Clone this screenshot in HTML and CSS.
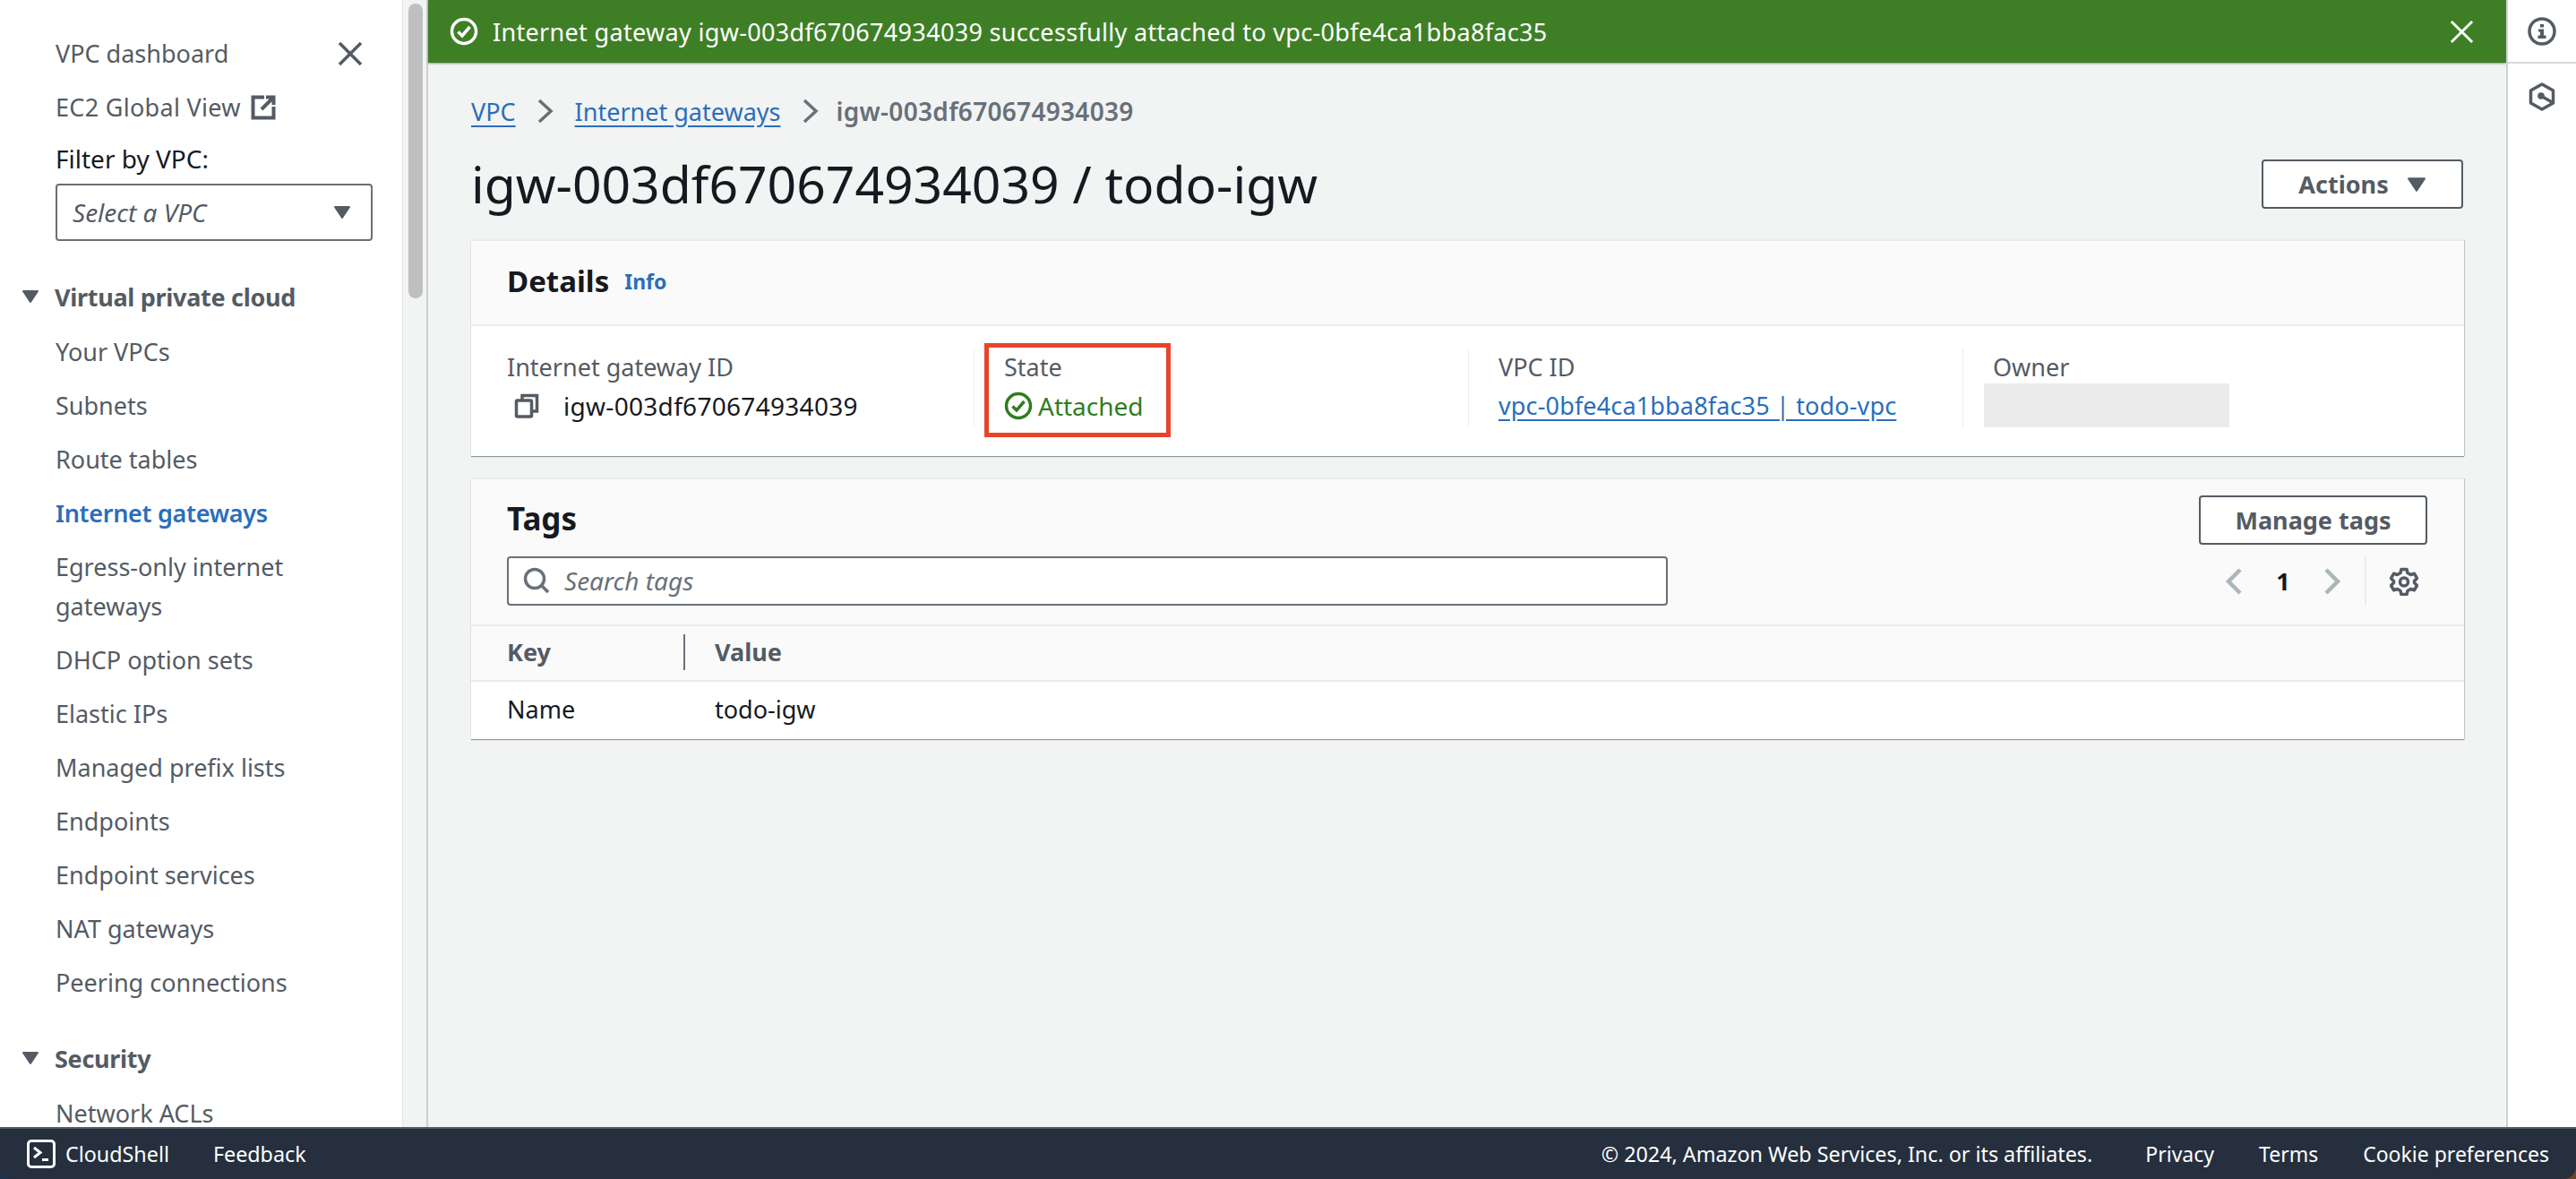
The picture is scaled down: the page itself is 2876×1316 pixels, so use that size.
FILE: index.html
```html
<!DOCTYPE html>
<html lang="en">
<head>
  <meta charset="UTF-8" />
  <title>Internet gateway details</title>
  <link rel="stylesheet" href="styles.css">
</head>
<body>
  <div class="app">
    <!-- left navigation -->
    <nav class="sidebar">
      <div class="nav-top">
        <a class="nav-link">VPC dashboard</a>
        <svg class="nav-close" viewBox="0 0 28 28"><path d="M2 2 26 26M26 2 2 26" /></svg>
      </div>
      <div class="nav-link nav-ext">EC2 Global View
        <svg class="ext-icon" viewBox="0 0 28 28"><path d="M15 2.500H2.500V25.500H25.500V13M25 3 12 16M17 2.500H25.500V11" /></svg>
      </div>
      <div class="filter-label">Filter by VPC:</div>
      <div class="select-box">
        <span>Select a VPC</span>
        <svg class="caret" viewBox="0 0 20 16"><path d="M2 2H18L10 14Z" /></svg>
      </div>
      <div class="nav-group">
        <svg class="caret" viewBox="0 0 20 16"><path d="M2 2H18L10 14Z" /></svg>
        <span>Virtual private cloud</span>
      </div>
      <a class="nav-item">Your VPCs</a>
      <a class="nav-item">Subnets</a>
      <a class="nav-item">Route tables</a>
      <a class="nav-item active">Internet gateways</a>
      <a class="nav-item wrap">Egress-only internet gateways</a>
      <a class="nav-item">DHCP option sets</a>
      <a class="nav-item">Elastic IPs</a>
      <a class="nav-item">Managed prefix lists</a>
      <a class="nav-item">Endpoints</a>
      <a class="nav-item">Endpoint services</a>
      <a class="nav-item">NAT gateways</a>
      <a class="nav-item">Peering connections</a>
      <div class="nav-group second">
        <svg class="caret" viewBox="0 0 20 16"><path d="M2 2H18L10 14Z" /></svg>
        <span>Security</span>
      </div>
      <a class="nav-item">Network ACLs</a>
    </nav>

    <div class="scroll-track"><div class="scroll-thumb"></div></div>

    <main class="main">
      <div class="banner">
        <svg class="check-icon" viewBox="0 0 32 32"><circle cx="16" cy="16" r="13.500" /><path d="M9.500 16.500 14 21 22.500 11" /></svg>
        <span class="banner-text">Internet gateway igw-003df670674934039 successfully attached to vpc-0bfe4ca1bba8fac35</span>
        <svg class="banner-close" viewBox="0 0 28 28"><path d="M2 2 26 26M26 2 2 26" /></svg>
      </div>

      <div class="content">
        <div class="breadcrumbs">
          <a class="link">VPC</a>
          <svg class="crumb-sep" viewBox="0 0 20 28"><path d="M3 2 16 14 3 26" /></svg>
          <a class="link">Internet gateways</a>
          <svg class="crumb-sep" viewBox="0 0 20 28"><path d="M3 2 16 14 3 26" /></svg>
          <span class="crumb-current">igw-003df670674934039</span>
        </div>

        <div class="page-head">
          <h1>igw-003df670674934039 / todo-igw</h1>
          <button class="btn btn-actions">Actions
            <svg class="caret" viewBox="0 0 20 16"><path d="M2 2H18L10 14Z" /></svg>
          </button>
        </div>

        <section class="card">
          <div class="card-head details-head">
            <h2>Details</h2>
            <a class="info-link">Info</a>
          </div>
          <div class="details-grid">
            <div class="col">
              <div class="col-label">Internet gateway ID</div>
              <div class="col-value igw-value">
                <svg class="copy-icon" viewBox="0 0 28 28"><path d="M9 7V2.500H25.500V20H20" /><rect x="2.500" y="8" width="17" height="18" rx="1" /></svg>
                <span>igw-003df670674934039</span>
              </div>
            </div>
            <div class="col col-state">
              <div class="col-label">State</div>
              <div class="col-value state">
                <svg class="check-icon" viewBox="0 0 32 32"><circle cx="16" cy="16" r="13.500" /><path d="M9.500 16.500 14 21 22.500 11" /></svg>
                <span>Attached</span>
              </div>
              <div class="highlight"></div>
            </div>
            <div class="col">
              <div class="col-label">VPC ID</div>
              <div class="col-value"><a class="link vpc-link">vpc-0bfe4ca1bba8fac35 | todo-vpc</a></div>
            </div>
            <div class="col">
              <div class="col-label">Owner</div>
              <div class="redacted"></div>
            </div>
          </div>
        </section>

        <section class="card tags-card">
          <div class="card-head tags-head">
            <div class="tags-title">
              <h2>Tags</h2>
              <button class="btn btn-manage">Manage tags</button>
            </div>
            <div class="tags-tools">
              <div class="search-box">
                <svg class="search-icon" viewBox="0 0 30 30"><circle cx="13" cy="13" r="10.500" /><path d="M20.500 20.500 28 28" /></svg>
                <span>Search tags</span>
              </div>
              <div class="pager">
                <svg class="pager-arrow" viewBox="0 0 20 30"><path d="M17 2 4 15 17 28" /></svg>
                <span class="page-num">1</span>
                <svg class="pager-arrow" viewBox="0 0 20 30"><path d="M3 2 16 15 3 28" /></svg>
                <div class="pager-sep"></div>
                <svg class="gear-icon" viewBox="0 0 32 32"><path d="M13 2.500H19L20 6.500 23.500 8.500 27.500 7.300 30.500 12.500 27.500 15.500V17.500L30.500 20.500 27.500 25.700 23.500 24.500 20 26.500 19 30.500H13L12 26.500 8.500 24.500 4.500 25.700 1.500 20.500 4.500 17.500V15.500L1.500 12.500 4.500 7.300 8.500 8.500 12 6.500Z" /><circle cx="16" cy="16.500" r="4.500" /></svg>
              </div>
            </div>
          </div>
          <div class="tags-row tags-columns">
            <div class="cell-key">Key</div>
            <div class="cell-value">Value</div>
          </div>
          <div class="tags-row tags-body">
            <div class="cell-key">Name</div>
            <div class="cell-value">todo-igw</div>
          </div>
        </section>
      </div>
    </main>

    <aside class="rail">
      <div class="rail-top">
        <svg class="rail-icon" viewBox="0 0 32 32"><circle cx="16" cy="16" r="14" /><path class="rail-fill" d="M14 8h4v3.500h-4zM12 13.500h6v7h2.500v3.500h-9v-3.500h2.500v-4h-2z" /></svg>
      </div>
      <div class="rail-next">
        <svg class="rail-icon" viewBox="0 0 32 32"><path d="M16 2 28.500 9V23L16 30 3.500 23V9Z" stroke-linejoin="round" /><circle class="rail-fill" cx="15" cy="15" r="3.800" /><path d="M15 15 27 22" /></svg>
      </div>
    </aside>
  </div>

  <footer class="footer">
    <svg class="shell-icon" viewBox="0 0 32 32"><rect x="1.500" y="1.500" width="29" height="29" rx="3.500" /><path d="M8 9 15 14.500 8 20" /><path d="M17 22.500H24" /></svg>
    <span class="foot-shell">CloudShell</span>
    <span class="foot-feedback">Feedback</span>
    <span class="foot-copy">© 2024, Amazon Web Services, Inc. or its affiliates.</span>
    <span class="foot-link">Privacy</span>
    <span class="foot-link">Terms</span>
    <span class="foot-link">Cookie preferences</span>
  </footer>
</body>
</html>
```

FILE: styles.css
```css
* {
  box-sizing: border-box;
}
html, body {
  height: 100%;
}
body {
  margin: 0;
  width: 2876px;
  height: 1316px;
  overflow: hidden;
  display: flex;
  flex-direction: column;
  font-family: "Noto Sans", "Open Sans", sans-serif;
  font-size: 27px;
  color: #16191f;
  /* only shows at the rounded window corners */
  background: linear-gradient(to right, #1c3350 50%, #6e4326 50%);
}
svg {
  display: block;
  flex: none;
  fill: none;
  stroke: currentColor;
}
.app {
  flex: 1;
  min-height: 0;
  display: flex;
  background: #f2f3f3;
}

/* sidebar */
.sidebar {
  width: 449px;
  flex: none;
  background: #fff;
  overflow: hidden;
  padding: 30px 0 0 62px;
  color: #545b64;
}
.nav-top {
  display: flex;
  align-items: center;
  justify-content: space-between;
  height: 60px;
  padding-right: 44px;
}
.nav-close {
  width: 28px;
  height: 28px;
  stroke-width: 3.500px;
}
.nav-link {
  line-height: 60px;
}
.nav-ext {
  display: flex;
  align-items: center;
  gap: 11px;
  height: 60px;
  letter-spacing: 0.3px;
}
.ext-icon {
  width: 28px;
  height: 28px;
  stroke-width: 4px;
}
.filter-label {
  color: #16191f;
  font-size: 28px;
  height: 36px;
  line-height: 36px;
  margin-top: 9px;
}
.select-box {
  width: 354px;
  height: 64px;
  margin-top: 10px;
  display: flex;
  align-items: center;
  justify-content: space-between;
  padding: 0 22px 0 17px;
  border: 2px solid #687078;
  border-radius: 4px;
  font-size: 28px;
  font-style: italic;
}
.caret {
  width: 20px;
  height: 16px;
  fill: currentColor;
  stroke-width: 2px;
  stroke-linejoin: round;
}
.nav-group {
  display: flex;
  align-items: center;
  gap: 17px;
  margin: 32px 0 2px -38px;
  height: 60px;
  font-weight: 700;
  letter-spacing: -0.3px;
}
.nav-group.second {
  margin-top: 24px;
  margin-bottom: 2px;
}
.nav-item {
  display: block;
  line-height: 44px;
  padding: 8px 0;
  height: 60px;
}
.nav-item.active {
  color: #2a6ebb;
  font-weight: 600;
  letter-spacing: -0.3px;
}
.nav-item.wrap {
  height: 104px;
  padding-right: 30px;
}
.scroll-track {
  width: 29px;
  flex: none;
  background: #f2f3f3;
  border-left: 1px solid #e3e5e6;
  border-right: 2px solid #cdd1d4;
  padding: 4px 0 0 6px;
}
.scroll-thumb {
  width: 16px;
  height: 329px;
  border-radius: 8px;
  background: #bfbfbf;
}

/* main column */
.main {
  flex: 1;
  min-width: 0;
}
.banner {
  height: 70px;
  background: #3e7f26;
  color: #fff;
  display: flex;
  align-items: center;
  padding: 0 0 0 24px;
  box-shadow: 0 1px 2px rgba(0, 0, 0, 0.4);
}
.banner .check-icon {
  width: 32px;
  height: 32px;
}
.check-icon {
  stroke-width: 3.500px;
}
.banner-text {
  margin-left: 16px;
  flex: 1;
  letter-spacing: 0.32px;
}
.banner-close {
  width: 27px;
  height: 27px;
  margin-right: 36px;
  stroke-width: 3px;
}
.content {
  padding: 0 47px 0 48px;
}
.link {
  color: #2a6ebb;
  text-decoration: underline;
  text-underline-offset: 5px;
}
.breadcrumbs {
  height: 108px;
  display: flex;
  align-items: center;
  gap: 23px;
}
.crumb-sep {
  width: 20px;
  height: 28px;
  stroke-width: 3.500px;
  color: #687078;
}
.crumb-current {
  margin-left: -4px;
  color: #687078;
  font-size: 28px;
  font-weight: 600;
  letter-spacing: 0.3px;
}
.page-head {
  display: flex;
  align-items: flex-start;
  justify-content: space-between;
  height: 90px;
  padding-right: 1px;
}
h1 {
  margin: 0;
  font-size: 57px;
  font-weight: 400;
  line-height: 54px;
}
h2 {
  margin: 0;
  font-size: 35px;
  font-weight: 700;
}
.btn {
  font: inherit;
  font-weight: 700;
  color: #545b64;
  background: #fff;
  border: 2px solid #545b64;
  border-radius: 4px;
  height: 55px;
  display: flex;
  align-items: center;
  justify-content: center;
}
.btn-actions {
  width: 225px;
  gap: 20px;
}
.btn-actions .caret {
  width: 22px;
  height: 18px;
}
.btn-manage {
  width: 255px;
}

/* cards */
.card {
  background: #fff;
  border-top: 1px solid #eaeded;
  box-shadow: 0 1px 1px rgba(0, 22, 43, 0.4), 1px 0 1px rgba(0, 22, 43, 0.15);
}
.card-head {
  background: #fafafa;
  border-bottom: 2px solid #eaeded;
}
.details-head {
  height: 95px;
  display: flex;
  align-items: center;
  gap: 17px;
  padding: 0 0 4px 40px;
}
.details-head h2 {
  font-size: 33px;
}
.info-link {
  color: #2a6ebb;
  font-size: 23px;
  font-weight: 700;
}
.details-grid {
  display: grid;
  grid-template-columns: 561px 552px 552px 560px;
  height: 145px;
  padding-top: 25px;
}
.col {
  position: relative;
  height: 88px;
  padding-left: 33px;
  border-left: 1px solid #eaeded;
}
.col:first-child {
  padding-left: 40px;
  border-left: 0;
}
.col-label {
  color: #545b64;
  line-height: 44px;
  margin: -1px 0;
}
.col-value {
  display: flex;
  align-items: center;
  line-height: 44px;
  gap: 24px;
}
.igw-value {
  padding-left: 8px;
  gap: 27px;
  font-size: 28px;
  letter-spacing: 0.3px;
}
.vpc-link {
  letter-spacing: 0.15px;
}
.copy-icon {
  width: 28px;
  height: 28px;
  color: #545b64;
  stroke-width: 3.500px;
}
.state {
  color: #2f7d1d;
  font-size: 28px;
  gap: 6px;
}
.state .check-icon {
  width: 32px;
  height: 32px;
}
.highlight {
  position: absolute;
  left: 11px;
  top: -6px;
  width: 208px;
  height: 105px;
  border: 5px solid #e8442a;
}
.redacted {
  width: 274px;
  height: 49px;
  margin: -4px 0 0 -10px;
  background: #ebebeb;
}
.tags-card {
  margin-top: 25px;
}
.tags-head {
  height: 164px;
  padding: 18px 41px 0 40px;
}
.tags-title {
  display: flex;
  align-items: center;
  justify-content: space-between;
  height: 55px;
}
.tags-title h2 {
  margin-top: -4px;
}
.tags-tools {
  display: flex;
  align-items: center;
  justify-content: space-between;
  height: 55px;
  margin-top: 13px;
}
.search-box {
  width: 1296px;
  height: 55px;
  display: flex;
  align-items: center;
  gap: 16px;
  padding: 0 0 2px 16px;
  background: #fff;
  border: 2px solid #687078;
  border-radius: 4px;
  color: #687078;
  font-size: 28px;
  font-style: italic;
}
.search-icon {
  width: 30px;
  height: 30px;
  stroke-width: 3.500px;
}
.pager {
  display: flex;
  align-items: center;
  height: 55px;
  margin-right: 10px;
}
.pager-arrow {
  width: 20px;
  height: 30px;
  stroke-width: 4.500px;
  color: #aab7b8;
}
.page-num {
  width: 90px;
  text-align: center;
  font-weight: 700;
}
.pager-sep {
  width: 2px;
  height: 55px;
  margin: 0 26px;
  background: #eaeded;
}
.gear-icon {
  width: 32px;
  height: 32px;
  stroke-width: 3.500px;
  stroke-linejoin: round;
  color: #545b64;
}
.tags-row {
  display: flex;
  align-items: center;
  padding-left: 40px;
}
.tags-columns {
  height: 62px;
  padding-bottom: 4px;
  background: #fafafa;
  border-bottom: 2px solid #eaeded;
  color: #545b64;
  font-weight: 700;
}
.tags-body {
  height: 64px;
  padding-bottom: 4px;
}
.cell-key {
  width: 232px;
}
.tags-columns .cell-key {
  position: relative;
}
.tags-columns .cell-key::after {
  content: "";
  position: absolute;
  right: 33px;
  top: -1px;
  width: 2px;
  height: 40px;
  background: #687078;
}

/* right rail */
.rail {
  width: 78px;
  flex: none;
  background: #fff;
  border-left: 2px solid #cdd1d4;
  color: #545b64;
}
.rail-top {
  height: 71px;
  border-bottom: 2px solid #d5dbdb;
  display: flex;
  align-items: center;
  padding-left: 22px;
}
.rail-next {
  padding: 21px 0 0 22px;
}
.rail-icon {
  width: 32px;
  height: 32px;
  stroke-width: 3.500px;
}
.rail-fill {
  fill: currentColor;
  stroke: none;
}

/* footer */
.footer {
  height: 58px;
  flex: none;
  display: flex;
  align-items: center;
  background: #252f3e;
  border-top: 2px solid #545b64;
  border-radius: 0 0 14px 14px;
  color: #fff;
  font-size: 23.300px;
  padding-left: 30px;
}
.shell-icon {
  width: 32px;
  height: 32px;
  stroke-width: 3px;
}
.foot-shell {
  margin-left: 11px;
}
.foot-feedback {
  margin-left: 49px;
}
.foot-copy {
  margin-left: auto;
  margin-right: 9px;
}
.foot-link {
  margin-left: 50px;
  font-size: 23px;
}
.foot-link:last-child {
  margin-right: 30px;
}
```
